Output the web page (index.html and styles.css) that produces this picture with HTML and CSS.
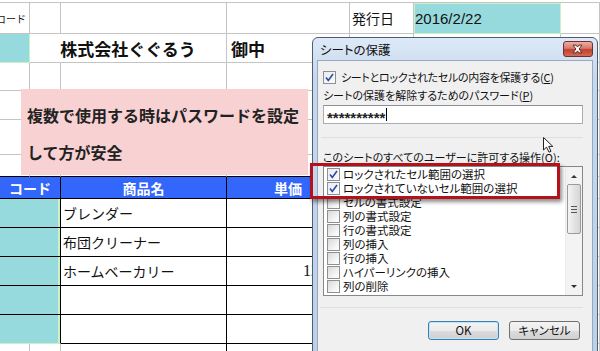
FILE: index.html
```html
<!DOCTYPE html>
<html>
<head>
<meta charset="utf-8">
<title>シートの保護</title>
<link rel="stylesheet" href="styles.css">
</head>
<body>

<div class="sheet">
    <!-- 1行目 -->
    <div class="cell small">コード</div>
    <div class="cell"></div>
    <div class="cell"></div>
    <div class="cell"></div>
    <div class="cell label">発行日</div>
    <div class="cell teal date">2016/2/22</div>
    <div class="cell"></div>

    <!-- 2行目 -->
    <div class="cell teal"></div>
    <div class="cell span2 company">株式会社ぐぐるう</div>
    <div class="cell company left">御中</div>
    <div class="cell"></div>
    <div class="cell"></div>
    <div class="cell"></div>

    <!-- 3〜6行目 -->
    <div class="cell"></div><div class="cell"></div><div class="cell"></div><div class="cell"></div><div class="cell"></div><div class="cell"></div><div class="cell"></div>
    <div class="cell"></div><div class="cell"></div><div class="cell"></div><div class="cell"></div><div class="cell"></div><div class="cell"></div><div class="cell"></div>
    <div class="cell"></div><div class="cell"></div><div class="cell"></div><div class="cell"></div><div class="cell"></div><div class="cell"></div><div class="cell"></div>
    <div class="cell edge"></div><div class="cell edge"></div><div class="cell edge"></div><div class="cell edge"></div><div class="cell"></div><div class="cell"></div><div class="cell"></div>

    <!-- 見出し -->
    <div class="cell span2 head">コード</div>
    <div class="cell head">商品名</div>
    <div class="cell head">単価</div>
    <div class="cell"></div>
    <div class="cell"></div>
    <div class="cell"></div>

    <!-- 明細 -->
    <div class="cell span2 teal code"></div>
    <div class="cell tb name">ブレンダー</div>
    <div class="cell tb price"></div>
    <div class="cell"></div><div class="cell"></div><div class="cell"></div>

    <div class="cell span2 teal code"></div>
    <div class="cell tb name">布団クリーナー</div>
    <div class="cell tb price"></div>
    <div class="cell"></div><div class="cell"></div><div class="cell"></div>

    <div class="cell span2 teal code"></div>
    <div class="cell tb name">ホームベーカリー</div>
    <div class="cell tb price">12,800</div>
    <div class="cell"></div><div class="cell"></div><div class="cell"></div>

    <div class="cell span2 teal code"></div>
    <div class="cell tb name"></div>
    <div class="cell tb price"></div>
    <div class="cell"></div><div class="cell"></div><div class="cell"></div>

    <div class="cell span2 teal code last"></div>
    <div class="cell tb name"></div>
    <div class="cell tb price"></div>
    <div class="cell"></div><div class="cell"></div><div class="cell"></div>

    <div class="cell"></div><div class="cell"></div><div class="cell tbl"></div><div class="cell tbl"></div><div class="cell"></div><div class="cell"></div><div class="cell"></div>
</div>

<div class="note">
    <p>複数で使用する時はパスワードを設定</p>
    <p>して方が安全</p>
</div>

<div class="dialog">
    <div class="titlebar">
        <span class="title">シートの保護</span>
        <span class="close">
            <svg width="30" height="16" viewBox="0 0 30 16">
                <path d="M10.5 4 L13.5 4 L15 6 L16.5 4 L19.5 4 L16.7 8 L19.5 12 L16.5 12 L15 10 L13.5 12 L10.5 12 L13.3 8 Z" fill="#fff" stroke="#4a1d1d" stroke-width="0.9" stroke-linejoin="round"/>
            </svg>
        </span>
    </div>
    <div class="body">
        <div class="check-row">
            <span class="cb on">
                <svg width="11" height="11" viewBox="0 0 11 11"><path d="M2 5.5 L4.3 8.5 L9 2" fill="none" stroke="#2b4aa0" stroke-width="1.6"/></svg>
            </span>
            <span>シートとロックされたセルの内容を保護する(<u>C</u>)</span>
        </div>
        <div class="field-label pw-label">シートの保護を解除するためのパスワード(<u>P</u>)</div>
        <div class="pw"><span class="stars">**********</span><span class="caret"></span></div>
        <div class="sep first"></div>
        <div class="field-label list-label">このシートのすべてのユーザーに許可する操作(<u>O</u>):</div>
        <div class="listbox">
            <ul class="items">
                <li><span class="cb on"><svg width="11" height="11" viewBox="0 0 11 11"><path d="M2 5.5 L4.3 8.5 L9 2" fill="none" stroke="#2b4aa0" stroke-width="1.6"/></svg></span>ロックされたセル範囲の選択</li>
                <li><span class="cb on"><svg width="11" height="11" viewBox="0 0 11 11"><path d="M2 5.5 L4.3 8.5 L9 2" fill="none" stroke="#2b4aa0" stroke-width="1.6"/></svg></span>ロックされていないセル範囲の選択</li>
                <li><span class="cb"></span>セルの書式設定</li>
                <li><span class="cb"></span>列の書式設定</li>
                <li><span class="cb"></span>行の書式設定</li>
                <li><span class="cb"></span>列の挿入</li>
                <li><span class="cb"></span>行の挿入</li>
                <li><span class="cb"></span>ハイパーリンクの挿入</li>
                <li><span class="cb"></span>列の削除</li>
            </ul>
            <div class="scrollbar">
                <span class="arrow up"></span>
                <span class="thumb"><i></i><i></i><i></i></span>
                <span class="arrow down"></span>
            </div>
        </div>
        <div class="sep second"></div>
        <div class="buttons">
            <button class="btn default">OK</button>
            <button class="btn">キャンセル</button>
        </div>
    </div>
</div>

<div class="highlight"></div>

<svg class="pointer" width="14" height="18" viewBox="0 0 14 18">
    <path d="M0.5 0.5 L0.5 13 L3.6 10.2 L6 15.2 L8 14.3 L5.7 9.4 L9.8 9.4 Z" fill="#fff" stroke="#222" stroke-width="1" stroke-linejoin="round"/>
</svg>

</body>
</html>
```

FILE: styles.css
```css
body {
    margin: 0;
    background-color: #fff;
    font-family: "Noto Sans CJK JP", sans-serif;
    overflow: hidden;
}

/* ワークシート */
.sheet {
    display: grid;
    grid-template-columns: 30px 31px 166px 123px 64px 147px 39px;
    grid-template-rows: 31px 29px 28px 29px 35px 22px 22px 29px 29px 29px 29px 29px 20px;
    margin-top: 2px;
    border-top: 1px solid #c4c4c4;
}
.cell {
    display: flex;
    align-items: center;
    padding: 0 2px;
    border-right: 1px solid #c4c4c4;
    border-bottom: 1px solid #c4c4c4;
    font-size: 14px;
    white-space: nowrap;
    overflow: hidden;
    color: #111;
}
.span2 {
    grid-column: span 2;
}
.small {
    justify-content: flex-end;
    padding: 0 3px 0 0;
    font-size: 10px;
}
.label {
    padding-left: 2px;
}
.teal {
    background-color: #97dade;
    border-color: #c9f0c6;
}
.date {
    font-family: "Liberation Sans", sans-serif;
    font-size: 15px;
    padding-left: 1px;
    box-shadow: inset 0 1px 0 #c9f0c6, inset 1px 0 0 #c9f0c6;
}
.company {
    justify-content: center;
    font-size: 17px;
    font-weight: bold;
}
.company.left {
    justify-content: flex-start;
    padding-left: 4px;
}
.edge {
    border-bottom-color: #000;
}
.head {
    justify-content: center;
    background-color: #3366fb;
    color: #fff;
    font-weight: bold;
    border-color: #000;
}
.tb {
    border-color: #000;
}
.tbl {
    border-right-color: #000;
}
.code {
    border-right-color: #000;
    border-bottom-color: #000;
    box-shadow: inset -2px 0 0 #c9f0c6;
}
.code.last {
    border-bottom-color: #c9f0c6;
}
.name {
    padding-left: 2px;
}
.price {
    justify-content: flex-end;
    font-family: "Liberation Serif", serif;
    font-size: 16px;
}

/* 注意書き */
.note {
    position: absolute;
    left: 21px;
    top: 89px;
    width: 281px;
    height: 78px;
    padding: 8px 0 0 6px;
    background-color: #f8d1d3;
}
.note p {
    margin: 0;
    font-size: 16px;
    font-weight: bold;
    line-height: 37px;
    color: #222;
}

/* ダイアログ */
.dialog {
    position: absolute;
    left: 312px;
    top: 37px;
    width: 276px;
    height: 318px;
    padding: 0 4px;
    border: 1px solid #4f5e72;
    border-radius: 6px 6px 0 0;
    background: linear-gradient(#dde9f7, #c6d8ee 40px, #bcd0ea);
    font-family: "Noto Sans CJK JP", sans-serif;
    font-feature-settings: "palt";
    font-size: 11px;
    color: #111;
}
.titlebar {
    display: flex;
    justify-content: space-between;
    align-items: flex-start;
    height: 22px;
}
.title {
    margin: 3px 0 0 3px;
    font-size: 12.5px;
    line-height: 18px;
}
.close {
    display: flex;
    margin-top: 3px;
    width: 30px;
    height: 16px;
    border: 1px solid #6d3030;
    border-radius: 3px;
    box-sizing: border-box;
    background: linear-gradient(#eab0a4, #d8786a 45%, #c0402e 55%, #d26a52);
}
.close svg {
    margin: -1px 0 0 -1px;
}
.body {
    display: flex;
    flex-direction: column;
    height: 300px;
    padding: 0 9px 0 5px;
    border: 1px solid #98a9be;
    background-color: #f0f0f0;
}
.check-row {
    display: flex;
    align-items: center;
    gap: 5px;
    margin-top: 10px;
    height: 13px;
    line-height: 13px;
    letter-spacing: -0.3px;
}
.cb {
    display: inline-flex;
    align-items: center;
    justify-content: center;
    flex: none;
    width: 11px;
    height: 11px;
    border: 1px solid #8e8f8f;
    background: linear-gradient(135deg, #d9d9d9, #f6f6f6 70%, #fff);
}
.cb.on {
    background: linear-gradient(135deg, #e8ebf0, #fafbfd);
}
.field-label {
    height: 14px;
    line-height: 14px;
}
.pw-label {
    margin-top: 4px;
}
.list-label {
    margin-top: 12px;
}
.pw {
    display: flex;
    align-items: center;
    margin-top: 3px;
    height: 17px;
    padding-left: 3px;
    border: 1px solid #abadb3;
    border-top-color: #8d9096;
    background-color: #fff;
}
.stars {
    font-family: "Liberation Sans", sans-serif;
    font-size: 15px;
    font-weight: bold;
    line-height: 17px;
    padding-top: 6px;
    color: #222;
}
.caret {
    width: 1px;
    height: 13px;
    margin-left: 1px;
    background-color: #000;
}
.sep {
    height: 1px;
    background-color: #d9e1e8;
}
.sep.first {
    margin: 13px 0 0 -2px;
}
.sep.second {
    margin: 11px 0 0 -3px;
}
.listbox {
    display: flex;
    margin-top: 2px;
    height: 128px;
    border: 1px solid #828790;
    background-color: #fff;
    font-size: 11.5px;
}
.items {
    flex: 1;
    margin: 0;
    padding: 0 0 0 3px;
    list-style: none;
}
.items li {
    display: flex;
    align-items: center;
    gap: 3px;
    height: 14px;
    line-height: 14px;
    white-space: nowrap;
}
.scrollbar {
    display: flex;
    flex-direction: column;
    align-items: center;
    width: 16px;
    background-color: #f3f3f3;
    border-left: 1px solid #ececec;
}
.arrow {
    width: 0;
    height: 0;
    border-left: 3px solid transparent;
    border-right: 3px solid transparent;
}
.arrow.up {
    margin-top: 8px;
    border-bottom: 3px solid #333;
}
.arrow.down {
    margin-top: auto;
    margin-bottom: 7px;
    border-top: 3px solid #333;
}
.thumb {
    display: flex;
    flex-direction: column;
    justify-content: center;
    align-items: center;
    gap: 2px;
    margin-top: 6px;
    width: 14px;
    height: 50px;
    border: 1px solid #9a9a9a;
    border-radius: 2px;
    box-sizing: border-box;
    background: linear-gradient(90deg, #f4f4f4, #e4e4e4 50%, #d6d6d6);
}
.thumb i {
    width: 6px;
    height: 1px;
    background-color: #555;
}
.buttons {
    display: flex;
    justify-content: flex-end;
    gap: 10px;
    margin-top: 13px;
    padding-right: 3px;
}
.btn {
    width: 71px;
    height: 19px;
    padding: 0;
    border: 1px solid #707070;
    border-radius: 3px;
    background: linear-gradient(#f3f3f3, #ebebeb 50%, #dddddd 51%, #cfcfcf);
    font-family: "Noto Sans CJK JP", sans-serif;
    font-feature-settings: "palt";
    font-size: 11.5px;
    line-height: 17px;
    color: #111;
}
.btn.default {
    border-color: #3c7fb1;
    box-shadow: inset 0 0 0 1px #bfe3f7;
}

/* 赤枠 */
.highlight {
    position: absolute;
    left: 310px;
    top: 163px;
    width: 244px;
    height: 30px;
    border: 3px solid #b3121b;
    box-shadow: 2px 3px 4px rgba(0, 0, 0, 0.45);
}

.pointer {
    position: absolute;
    left: 543px;
    top: 137px;
}
```
